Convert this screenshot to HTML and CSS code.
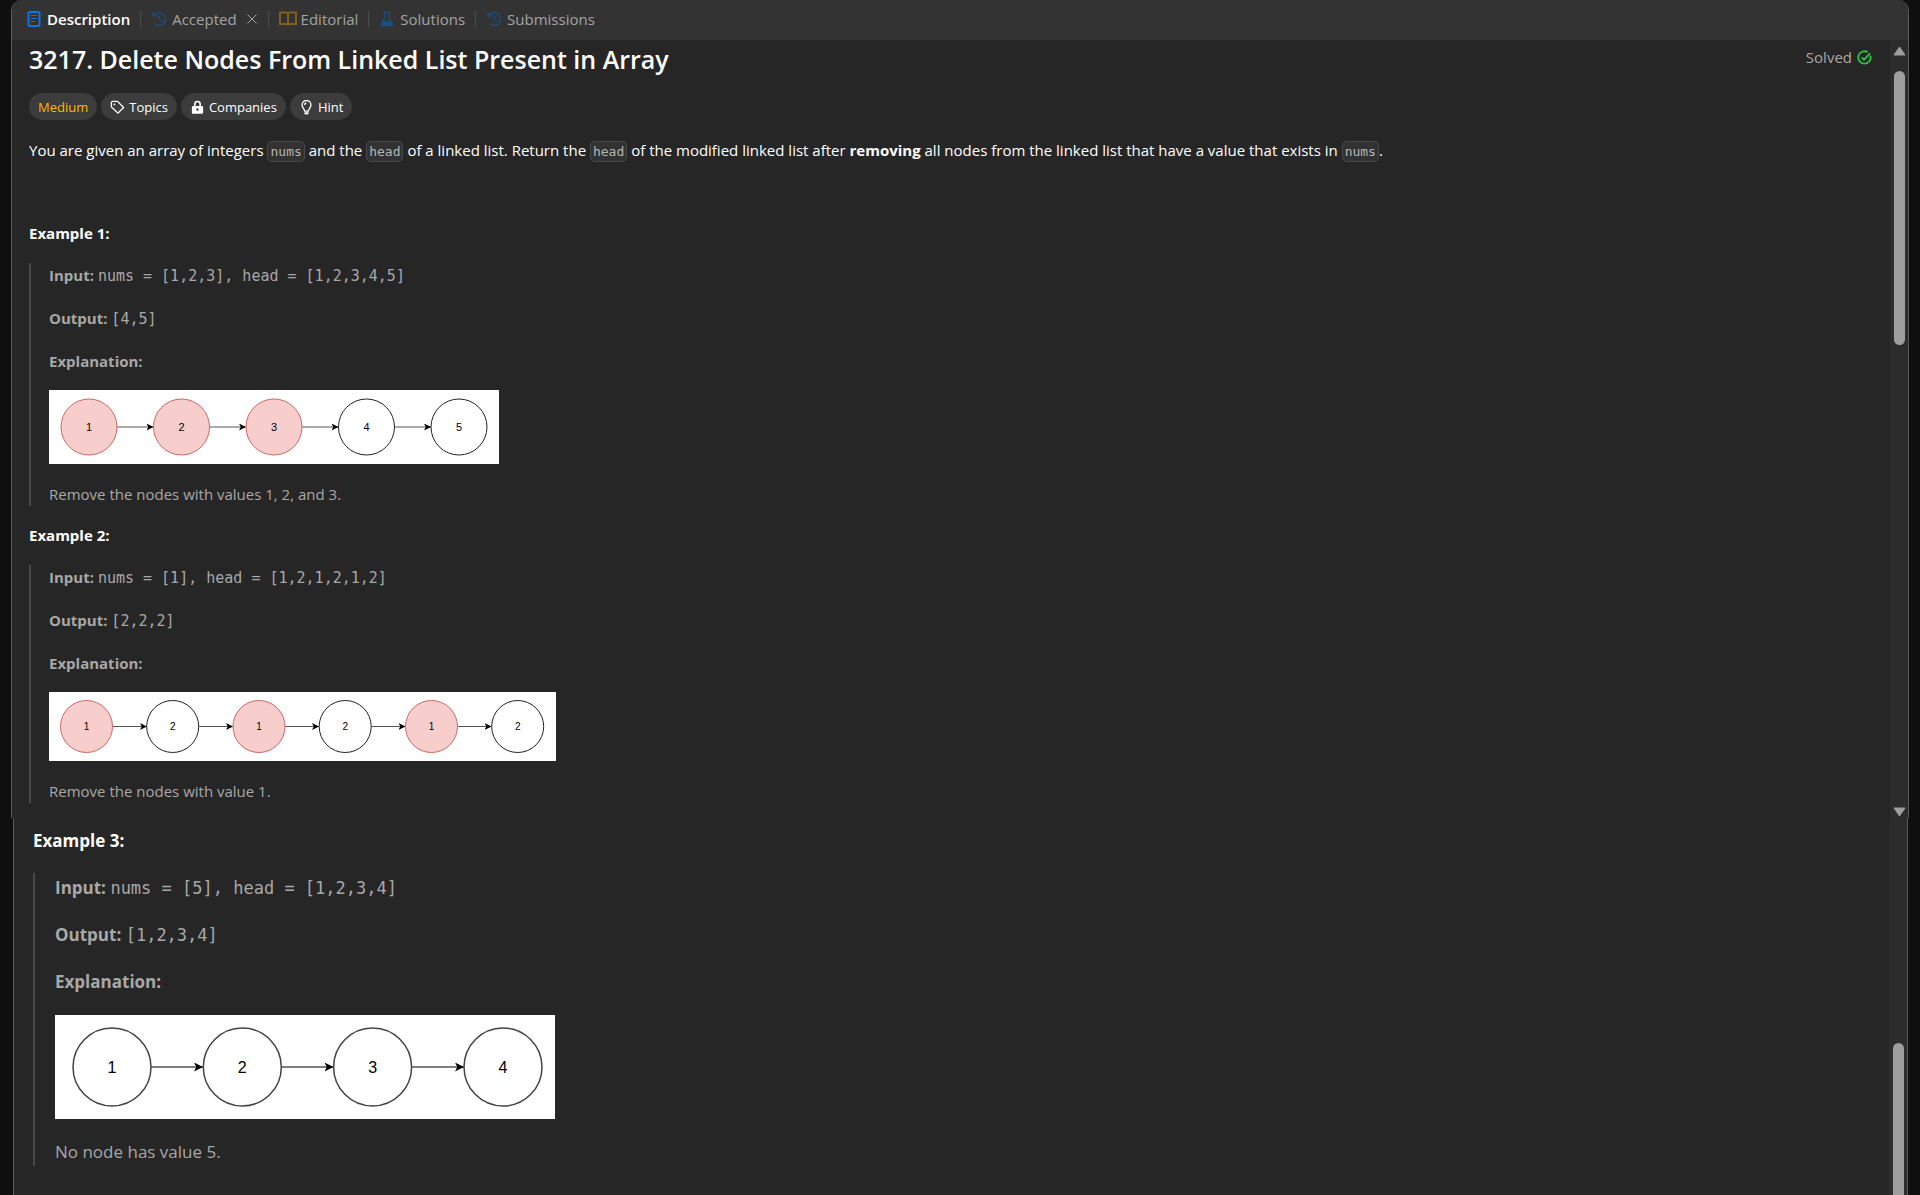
FILE: index.html
```html
<!DOCTYPE html>
<html lang="en">
<head>
<meta charset="utf-8">
<title>3217. Delete Nodes From Linked List Present in Array</title>
<link rel="stylesheet" href="styles.css">
</head>
<body>
<svg class="defs" aria-hidden="true">
  <defs>
    <symbol id="history" viewBox="0 0 18 18"><path d="M3 5.200A7.200 7.200 0 1 1 4.600 14.600M2.200 1.800 2.800 5.800 6.800 5.400M9.600 5.400V9.600L12.200 11.600" fill="none" stroke="currentColor" stroke-width="1.500" stroke-linecap="round" stroke-linejoin="round"/></symbol>
    <marker id="arrow" viewBox="0 0 8 8" refX="8" refY="4" markerWidth="7" markerHeight="7" markerUnits="userSpaceOnUse" orient="auto"><path d="M0 0 8 4 0 8 2 4Z"/></marker>
    <marker id="arrow-large" viewBox="0 0 8 8" refX="8" refY="4" markerWidth="9" markerHeight="9" markerUnits="userSpaceOnUse" orient="auto"><path d="M0 0 8 4 0 8 2 4Z"/></marker>
  </defs>
</svg>

<section class="panel panel--main">
  <nav class="tabs" aria-label="Problem tabs">
    <button class="tab tab--active" type="button">
      <svg class="tab-icon tab-icon--doc" viewBox="0 0 14 16" aria-hidden="true"><rect x="1.500" y="1" width="11" height="14" rx="1.500"/><path d="M4 4.500h6M4 7.500h6M4 10.500h3.500"/></svg>
      Description
    </button>
    <span class="divider"></span>
    <button class="tab" type="button"><svg class="tab-icon tab-icon--blue" aria-hidden="true"><use href="#history"/></svg>Accepted</button>
    <button class="close" type="button" aria-label="Close tab"><svg viewBox="0 0 12 12" aria-hidden="true"><path d="M1.500 1.500 10.500 10.500M10.500 1.500 1.500 10.500"/></svg></button>
    <span class="divider"></span>
    <button class="tab tab--editorial" type="button">
      <svg class="tab-icon tab-icon--book" viewBox="0 0 18 16" aria-hidden="true"><path d="M9 3.500C9 2.200 8 1.500 6.800 1.500H1V13H7.500C8.400 13 9 13.600 9 14.500 9 13.600 9.600 13 10.500 13H17V1.500H11.200C10 1.500 9 2.200 9 3.500ZM9 3.500V14"/></svg>Editorial
    </button>
    <span class="divider"></span>
    <button class="tab" type="button"><svg class="tab-icon tab-icon--flask" viewBox="0 0 14 16" aria-hidden="true"><path d="M3.500.5h7v1.800H10V6l3.300 7.500c.5 1.200-.2 2-1.300 2H2c-1.100 0-1.800-.8-1.300-2L4 6V2.300h-.5ZM5.300 2.300V6.300L3.900 9.700h6.200L8.700 6.300v-4Z" fill-rule="evenodd"/></svg>Solutions</button>
    <span class="divider"></span>
    <button class="tab" type="button"><svg class="tab-icon tab-icon--blue" aria-hidden="true"><use href="#history"/></svg>Submissions</button>
  </nav>

  <div class="panel-body">
    <main class="content">
      <header class="heading">
        <h1>3217. Delete Nodes From Linked List Present in Array</h1>
        <p class="solved">Solved
          <svg viewBox="0 0 16 16" aria-hidden="true"><path d="M14.300 6.200A6.600 6.600 0 1 1 11.300 2.300M5 8l2.500 2.300L14 3.500"/></svg>
        </p>
      </header>

      <div class="pills">
        <span class="pill pill--medium">Medium</span>
        <button class="pill" type="button"><svg viewBox="0 0 16 16" aria-hidden="true"><path d="M1.500 2.500 2.500 1.500H8L14.500 8 8.500 14 1.500 7.500Z" class="line"/><circle cx="4.700" cy="4.700" r="1"/></svg>Topics</button>
        <button class="pill" type="button"><svg viewBox="0 0 16 16" aria-hidden="true"><path d="M4.300 6.500V4.500a3.700 3.700 0 0 1 7.400 0v2h.8c1 0 1.500.6 1.500 1.500v5c0 1-.6 1.700-1.600 1.700H3.600C2.600 14.700 2 14 2 13V8c0-.9.600-1.500 1.500-1.500ZM6 6.500h4v-2a2 2 0 0 0-4 0ZM8 8.800a1.300 1.300 0 1 0 0 2.600 1.300 1.300 0 0 0 0-2.600Z" fill-rule="evenodd"/></svg>Companies</button>
        <button class="pill" type="button"><svg viewBox="0 0 16 16" aria-hidden="true"><path d="M6 11.800C6 9.500 3.300 8.500 3.300 5.200a4.700 4.700 0 0 1 9.400 0C12.700 8.500 10 9.500 10 11.800ZM6 5.200Q6 3.500 7.800 3.200" class="line"/><path d="M5.800 13h4.400v1.200L9.200 15.500H6.800L5.800 14.200Z"/></svg>Hint</button>
      </div>

      <p class="statement">You are given an array of integers <code>nums</code> and the <code>head</code> of a linked list. Return the <code>head</code> of the modified linked list after <strong>removing</strong> all nodes from the linked list that have a value that exists in <code>nums</code>.</p>

      <h2>Example 1:</h2>
      <blockquote>
        <p><strong>Input:</strong> <samp>nums = [1,2,3], head = [1,2,3,4,5]</samp></p>
        <p><strong>Output:</strong> <samp>[4,5]</samp></p>
        <p class="explanation"><strong>Explanation:</strong></p>
        <svg class="figure" width="450" height="74" viewBox="0 0 450 74" role="img" aria-label="List 1 to 5, nodes 1, 2 and 3 removed">
          <g class="edges"><path d="M68 37H104.500"/><path d="M160.500 37H197"/><path d="M253 37H289.500"/><path d="M345.500 37H382"/></g>
          <g class="nodes removed"><circle cx="40" cy="37" r="28"/><circle cx="132.500" cy="37" r="28"/><circle cx="225" cy="37" r="28"/></g>
          <g class="nodes"><circle cx="317.500" cy="37" r="28"/><circle cx="410" cy="37" r="28"/></g>
          <g class="labels"><text x="40" y="41">1</text><text x="132.500" y="41">2</text><text x="225" y="41">3</text><text x="317.500" y="41">4</text><text x="410" y="41">5</text></g>
        </svg>
        <p>Remove the nodes with values 1, 2, and 3.</p>
      </blockquote>

      <h2>Example 2:</h2>
      <blockquote>
        <p><strong>Input:</strong> <samp>nums = [1], head = [1,2,1,2,1,2]</samp></p>
        <p><strong>Output:</strong> <samp>[2,2,2]</samp></p>
        <p class="explanation"><strong>Explanation:</strong></p>
        <svg class="figure" width="507" height="69" viewBox="0 0 507 69" role="img" aria-label="List 1, 2, 1, 2, 1, 2, nodes with value 1 removed">
          <g class="edges"><path d="M63.500 34.500H98"/><path d="M149.700 34.500H184"/><path d="M236 34.500H270"/><path d="M322 34.500H356.500"/><path d="M408.500 34.500H442.500"/></g>
          <g class="nodes removed"><circle cx="37.500" cy="34.500" r="26"/><circle cx="210" cy="34.500" r="26"/><circle cx="382.500" cy="34.500" r="26"/></g>
          <g class="nodes"><circle cx="123.700" cy="34.500" r="26"/><circle cx="296.200" cy="34.500" r="26"/><circle cx="468.700" cy="34.500" r="26"/></g>
          <g class="labels labels--small"><text x="37.500" y="38">1</text><text x="123.700" y="38">2</text><text x="210" y="38">1</text><text x="296.200" y="38">2</text><text x="382.500" y="38">1</text><text x="468.700" y="38">2</text></g>
        </svg>
        <p>Remove the nodes with value 1.</p>
      </blockquote>
    </main>
    <div class="scrollbar" aria-hidden="true">
      <svg class="arrow" viewBox="0 0 13 10"><path d="M6.500 1 12 9H1Z"/></svg>
      <span class="thumb"></span>
      <svg class="arrow arrow--down" viewBox="0 0 13 10"><path d="M6.500 9 12 1H1Z"/></svg>
    </div>
  </div>
</section>

<section class="panel panel--more">
  <div class="panel-body">
    <div class="content">
      <h2>Example 3:</h2>
      <blockquote>
        <p><strong>Input:</strong> <samp>nums = [5], head = [1,2,3,4]</samp></p>
        <p><strong>Output:</strong> <samp>[1,2,3,4]</samp></p>
        <p><strong>Explanation:</strong></p>
        <svg class="figure" width="500" height="104" viewBox="0 0 500 104" role="img" aria-label="List 1 to 4, nothing removed">
          <g class="edges edges--large"><path d="M96 52H148"/><path d="M226.300 52H278.500"/><path d="M356.600 52H409"/></g>
          <g class="nodes nodes--large"><circle cx="57" cy="52" r="39"/><circle cx="187.300" cy="52" r="39"/><circle cx="317.600" cy="52" r="39"/><circle cx="448" cy="52" r="39"/></g>
          <g class="labels labels--large"><text x="57" y="58">1</text><text x="187.300" y="58">2</text><text x="317.600" y="58">3</text><text x="448" y="58">4</text></g>
        </svg>
        <p>No node has value 5.</p>
      </blockquote>
    </div>
    <div class="scrollbar" aria-hidden="true"><span class="thumb"></span></div>
  </div>
</section>
</body>
</html>
```
FILE: styles.css
```css
* { box-sizing: border-box; }

body {
  margin: 0;
  min-height: 100vh;
  display: flex;
  flex-direction: column;
  background: #0f0f0f;
  color: #fff;
  font: 15px/23px "Open Sans", "Noto Sans", sans-serif;
}

h1, h2, p, blockquote { margin: 0; }
button { border: 0; background: none; padding: 0; font: inherit; color: inherit; }
.defs { position: absolute; width: 0; height: 0; }

.panel { background: #262626; border: 0 solid #5a5a5a; border-width: 0 1px; }
.panel--main { margin: 0 11px; border-radius: 10px 10px 0 0; overflow: hidden; }
.panel--more { margin: 0 12px 0 13px; flex: 1; display: flex; font-size: 17px; line-height: 28px; }
.panel-body { display: flex; flex: 1; }
.content { flex: 1; min-width: 0; padding: 3px 18px 15px 17px; }

/* Tabs */
.tabs { display: flex; align-items: center; height: 40px; padding: 0 15px 2px; background: #333; color: #a3a3a3; }
.tab { display: flex; align-items: center; gap: 5px; white-space: nowrap; }
.tab--active { gap: 6px; color: #fff; font-weight: 600; }
.tab--editorial { gap: 4px; }
.tab-icon { width: 16px; height: 16px; }
.tab-icon--blue { color: #1c4d80; }
.tab-icon--doc { width: 14px; fill: none; stroke: #0a75e8; stroke-width: 2; }
.tab-icon--doc path { stroke-width: 1; }
.tab-icon--book { width: 18px; fill: none; stroke: #80601a; stroke-width: 2; }
.tab-icon--flask { fill: #1c4d80; }
.divider { width: 1px; height: 16px; margin: 0 10px; background: #4d4d4d; }
.close { display: flex; margin-left: 9px; }
.close svg { width: 12px; height: 12px; stroke: #a3a3a3; stroke-width: 1; }

/* Title */
.heading { display: flex; justify-content: space-between; align-items: flex-start; }
h1 { font-size: 25px; line-height: 32px; font-weight: 600; }
.solved { display: flex; align-items: center; gap: 5px; line-height: 28px; color: #a8a8a8; }
.solved svg { width: 15px; height: 15px; fill: none; stroke: #28c244; stroke-width: 2; }

.pills { display: flex; gap: 4px; margin-top: 18px; font-size: 13px; }
.pill { display: flex; align-items: center; gap: 4px; height: 27px; padding: 1px 9px 0; border-radius: 14px; background: #3c3c3c; color: #fff; }
.pill--medium { color: #ffb700; }
.pill svg { width: 15px; height: 15px; fill: #fff; }
.pill .line { fill: none; stroke: #fff; stroke-width: 1.4; }

.statement { margin: 19px 0 60px; }
code {
  padding: 2px;
  border: 1px solid #484848;
  border-radius: 5px;
  background: #323232;
  color: #b5b5b5;
  font: 13px "DejaVu Sans Mono", monospace;
}

/* Examples */
h2 { font-size: inherit; line-height: inherit; font-weight: 700; color: #fff; margin-bottom: 18px; }
blockquote { border-left: 2px solid #484848; padding: 1px 0 0 18px; color: #a8a8a8; margin-bottom: 18px; }
blockquote:last-child { margin-bottom: 0; }
blockquote p { margin-bottom: 20px; }
blockquote .explanation { margin-bottom: 17px; }
blockquote p:last-child { margin-bottom: 0; }
samp { font-family: "DejaVu Sans Mono", monospace; font-size: 15px; line-height: 1; }

.panel--more .content { padding: 9px 19px; }
.panel--more blockquote { padding-left: 20px; }
.panel--more blockquote p:not(:last-child) { margin-bottom: 19px; }
.panel--more samp { font-size: 17px; }

/* Linked list diagrams */
.figure { display: block; background: #fff; margin-bottom: 19px; }
.nodes { fill: #fff; stroke: #222; stroke-width: 1; }
.nodes--large { stroke: #444; stroke-width: 1.5; }
.removed { fill: #f8cecc; stroke: #c66; }
.edges { fill: none; stroke: #555; }
.edges path { marker-end: url(#arrow); }
.edges--large { stroke-width: 1.5; }
.edges--large path { marker-end: url(#arrow-large); }
.labels { font: 11px "Liberation Sans", Arial, sans-serif; text-anchor: middle; fill: #000; }
.labels--small { font-size: 10px; }
.labels--large { font-size: 16px; }

/* Scrollbars */
.scrollbar { display: flex; flex-direction: column; align-items: center; width: 18px; padding: 6px 0 1px; background: #2c2c2c; }
.arrow { width: 13px; height: 10px; fill: #9e9e9e; stroke: #9e9e9e; stroke-width: 1; stroke-linejoin: round; }
.thumb { width: 11px; height: 274px; margin-top: 15px; border-radius: 6px; background: #9e9e9e; }
.arrow--down { margin-top: auto; }
.panel--more .scrollbar { padding: 225px 0 0; }
.panel--more .thumb { flex: 1; margin: 0; border-radius: 6px 6px 0 0; }
```
